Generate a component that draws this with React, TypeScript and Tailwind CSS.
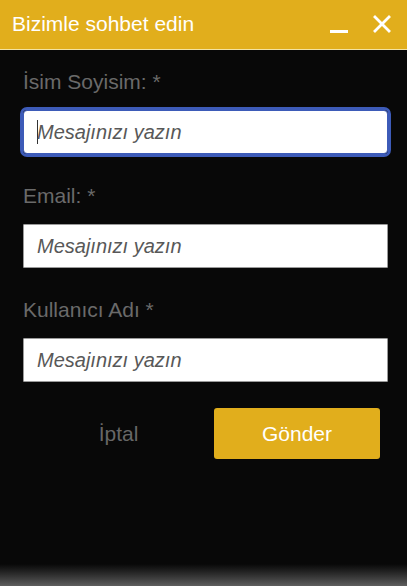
import React from 'react';

const font = { fontFamily: '"Liberation Sans", Arial, sans-serif' };

function Field({ label, focused }: { label: string; focused?: boolean }) {
  return (
    <div className="flex flex-col">
      <label className="text-[21px] leading-[22px] text-[#6a6a6a] mb-[17px]">{label}</label>
      <div
        className={`h-[44px] bg-white flex items-center px-[13px] ${
          focused
            ? 'rounded-[4px] outline-[3px] outline-solid outline-[#3d5bb8] border border-[#3d5bb8]'
            : 'rounded-[1px] border border-[#9a9a9a]'
        }`}
      >
        {focused && <span className="w-px h-[24px] bg-[#333] mr-[-1px]" />}
        <span className="italic text-[20px] text-[#585858]">Mesajınızı yazın</span>
      </div>
    </div>
  );
}

export default function App() {
  return (
    <div className="w-[407px] h-[586px] flex flex-col bg-[#080808] overflow-hidden" style={font}>
      {/* Header */}
      <div className="h-[50px] shrink-0 bg-[#e1ae1c] border-b border-[#f3e3a2] flex items-center justify-between pl-[12px] pr-[16px]">
        <span className="text-white text-[21px] leading-none pb-[2px]">Bizimle sohbet edin</span>
        <div className="flex items-center gap-[25px]">
          <svg width="18" height="20" viewBox="0 0 18 20">
            <rect x="0" y="15" width="18" height="3" fill="white" />
          </svg>
          <svg width="18" height="18" viewBox="0 0 18 18" className="mt-[-1px]">
            <path d="M2 2 L16 16 M16 2 L2 16" stroke="white" strokeWidth="2.8" strokeLinecap="square" />
          </svg>
        </div>
      </div>

      {/* Form */}
      <div className="flex-1 flex flex-col pt-[21px] pl-[23px] pr-[19px]">
        <div className="flex flex-col gap-[31px]">
          <Field label="İsim Soyisim: *" focused />
          <Field label="Email: *" />
          <Field label="Kullanıcı Adı *" />
        </div>
        <div className="flex items-center mt-[26px] pr-[8px]">
          <button className="flex-1 text-center text-[21px] text-[#676767]">İptal</button>
          <button className="w-[166px] h-[51px] rounded-[3px] bg-[#e1ae1c] text-white text-[21px]">
            Gönder
          </button>
        </div>
      </div>

      {/* bottom shadow */}
      <div className="h-[22px] shrink-0 bg-gradient-to-b from-[#080808] to-[#5e5e5e]" />
    </div>
  );
}
